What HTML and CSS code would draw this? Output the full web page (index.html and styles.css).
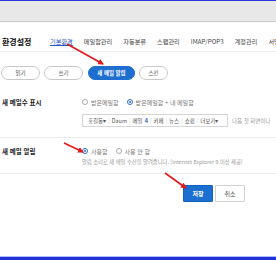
FILE: index.html
```html
<!DOCTYPE html>
<html lang="ko">
<head>
    <meta charset="UTF-8">
    <title>환경설정</title>
    <link rel="stylesheet" href="styles.css">
</head>
<body>
    <div class="topbar"></div>

    <main class="page">
        <div class="head">
            <h1 class="title">환경설정</h1>
            <nav class="tabs">
                <a class="tab active">기본환경</a>
                <a class="tab">메일함관리</a>
                <a class="tab">자동분류</a>
                <a class="tab">스팸관리</a>
                <a class="tab">IMAP/POP3</a>
                <a class="tab">계정관리</a>
                <a class="tab">서명관리</a>
            </nav>
        </div>

        <div class="pills">
            <span class="pill w39">읽기</span>
            <span class="pill w39">쓰기</span>
            <span class="pill pillOn">새 메일 알림</span>
            <span class="pill w29">스킨</span>
        </div>

        <section class="row rowCount">
            <div class="label">새 메일수 표시</div>
            <div class="field">
                <div class="radios">
                    <label class="radio"><span class="dot"></span>받은메일함</label>
                    <label class="radio"><span class="dot on"></span>받은메일함 + 내 메일함</label>
                </div>
                <div class="previewLine">
                    <div class="preview">
                        홍길동▾ <i>|</i> Daum <i>|</i> 메일 <b>4</b> <i>|</i> 카페 <i>|</i> 뉴스 <i>|</i> 쇼핑 <i>|</i> 더보기▾
                    </div>
                    <span class="note">다음 첫 화면이나</span>
                </div>
            </div>
        </section>

        <section class="row rowAlert">
            <div class="label">새 메일 알림</div>
            <div class="field">
                <div class="radios">
                    <label class="radio"><span class="dot on"></span>사용함</label>
                    <label class="radio"><span class="dot"></span>사용 안 함</label>
                </div>
                <p class="hint">알림 소리로 새 메일 수신을 알려줍니다. (Internet Explorer 9 이상 제공)</p>
            </div>
        </section>

        <div class="actions">
            <button class="btnSave">저장</button>
            <button class="btnCancel">취소</button>
        </div>
    </main>

    <div class="bottombar"></div>

    <!-- red hint arrows drawn over the page -->
    <svg class="arrows" width="276" height="260" viewBox="0 0 276 260">
        <defs>
            <marker id="head" markerWidth="6" markerHeight="6" refX="5" refY="3" orient="auto" markerUnits="userSpaceOnUse">
                <path d="M0,0 L6,3 L0,6 Z" fill="#e3191c"/>
            </marker>
        </defs>
        <line x1="67" y1="44" x2="103" y2="64" stroke="#e3191c" stroke-width="1.6" marker-end="url(#head)"/>
        <line x1="64" y1="143" x2="83" y2="152" stroke="#e3191c" stroke-width="1.6" marker-end="url(#head)"/>
        <line x1="165" y1="173" x2="186" y2="188" stroke="#e3191c" stroke-width="1.6" marker-end="url(#head)"/>
    </svg>
</body>
</html>
```

FILE: styles.css
```css
* {
    margin: 0;
    padding: 0;
    box-sizing: border-box;
}

body {
    font-family: "Noto Sans CJK KR", "Noto Sans", sans-serif;
    background-color: #fff;
    color: #222;
    width: 276px;
    height: 260px;
    overflow: hidden;
    display: flex;
    flex-direction: column;
    position: relative;
}

.topbar {
    height: 22px;
    flex-shrink: 0;
    background-color: #e8e8e8;
    border-top: 1px solid #2b35d8;
    border-bottom: 1px solid #c9c9c9;
}

.page {
    flex: 1;
    white-space: nowrap;
    overflow: hidden;
}

.head {
    display: flex;
    align-items: center;
    height: 20px;
    margin-top: 10px;
    padding-left: 2px;
    border-bottom: 1px solid #ececec;
}

.title {
    font-size: 8px;
    font-weight: bold;
    width: 48px;
    flex-shrink: 0;
    color: #111;
}

.tabs {
    display: flex;
    gap: 11px;
}

.tab {
    font-size: 6.2px;
    color: #444;
    flex-shrink: 0;
}

.tab.active {
    color: #2557c6;
    text-decoration: underline;
}

.pills {
    display: flex;
    gap: 4px;
    margin-top: 14px;
    padding-left: 1px;
}

.pill {
    height: 14px;
    border: 1px solid #c8c8c8;
    border-radius: 7px;
    font-size: 5.5px;
    color: #555;
    display: flex;
    align-items: center;
    justify-content: center;
}

.w39 { width: 39px; }
.w29 { width: 29px; }

.pillOn {
    width: 47px;
    margin-left: 1px;
    background-color: #1f6fd1;
    border-color: #1f6fd1;
    color: #fff;
    font-weight: bold;
}

.row {
    display: flex;
    border-bottom: 1px solid #ececec;
}

.rowCount {
    padding: 17px 0 10px;
}

.rowAlert {
    padding: 8px 0 6px;
}

.label {
    width: 82px;
    flex-shrink: 0;
    padding-left: 2px;
    font-size: 6.5px;
    font-weight: bold;
    line-height: 10px;
    color: #222;
}

.field {
    min-width: 0;
}

.radios {
    display: flex;
    gap: 8px;
    height: 10px;
    align-items: center;
}

.radio {
    display: flex;
    align-items: center;
    gap: 3px;
    font-size: 6px;
    color: #777;
}

.dot {
    width: 6px;
    height: 6px;
    border: 1px solid #aaa;
    border-radius: 50%;
    position: relative;
}

.dot.on {
    border-color: #2a6fd0;
}

.dot.on::after {
    content: "";
    position: absolute;
    left: 1px;
    top: 1px;
    width: 2px;
    height: 2px;
    border-radius: 50%;
    background-color: #2a6fd0;
}

.previewLine {
    display: flex;
    align-items: center;
    margin-top: 7px;
}

.preview {
    width: 146px;
    height: 13px;
    flex-shrink: 0;
    border: 1px solid #d6d6d6;
    font-size: 5.5px;
    color: #555;
    display: flex;
    align-items: center;
    gap: 2px;
    padding-left: 5px;
    overflow: hidden;
}

.preview i {
    font-style: normal;
    color: #ccc;
}

.preview b {
    color: #2a6fd0;
}

.note {
    margin-left: 4px;
    font-size: 5.5px;
    color: #999;
}

.hint {
    margin-top: 1px;
    font-size: 5.3px;
    line-height: 10px;
    color: #999;
}

.actions {
    display: flex;
    gap: 2px;
    margin-top: 11px;
    padding-left: 183px;
}

.btnSave,
.btnCancel {
    width: 30px;
    height: 17px;
    font-family: inherit;
    font-size: 6px;
    border-radius: 1px;
}

.btnSave {
    background-color: #1a6fd0;
    border: 1px solid #1562bd;
    color: #fff;
    font-weight: bold;
}

.btnCancel {
    background-color: #fff;
    border: 1px solid #d2d2d2;
    color: #444;
}

.bottombar {
    height: 4px;
    flex-shrink: 0;
    border-top: 1px solid #aebcff;
    background-color: #2230d8;
}

.arrows {
    position: absolute;
    left: 0;
    top: 0;
    pointer-events: none;
}
```
